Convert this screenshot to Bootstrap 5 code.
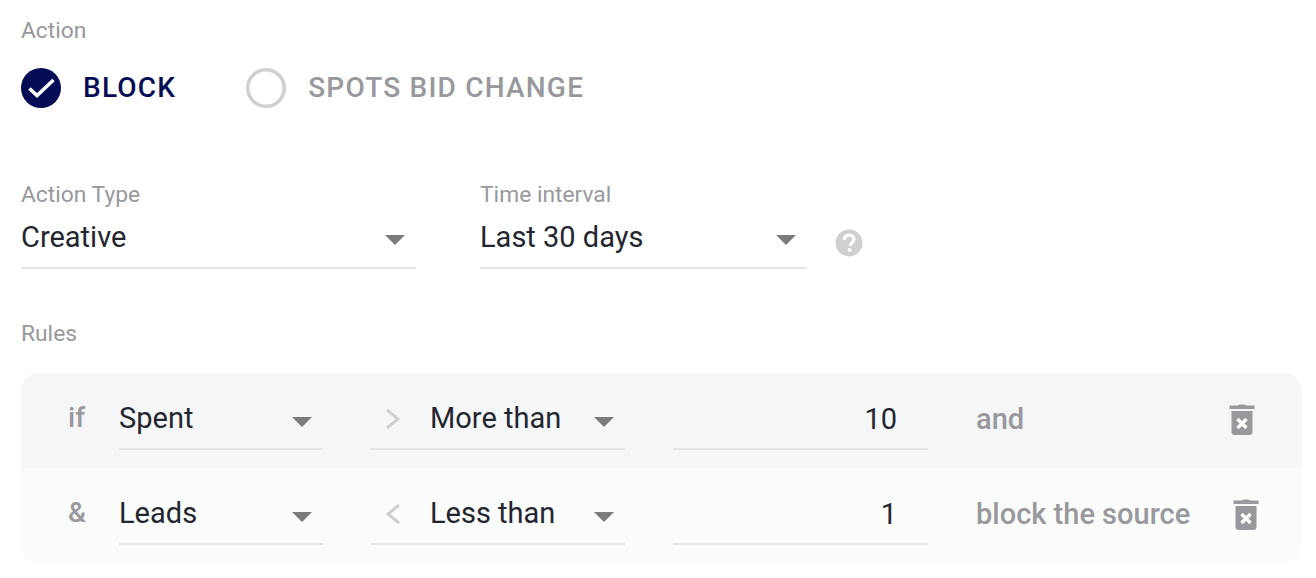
<!DOCTYPE html>
<html lang="en">
<head>
<meta charset="utf-8">
<title>Action</title>
<link href="https://cdn.jsdelivr.net/npm/bootstrap@5.3.0/dist/css/bootstrap.min.css" rel="stylesheet">
<style>
html,body{height:578px;overflow:hidden;background:#fff}
body{font-family:Roboto,"Liberation Sans",sans-serif;color:#24262f}
.pg{padding:17px 14px 0 21px}
.lab{font-size:22.8px;line-height:28px;height:26px;color:#98989d}
.radios{margin-top:25px;height:40px;gap:70px}
.rad{gap:22px;font-size:28px;font-weight:500;letter-spacing:1.2px;line-height:40px;color:#98989d}
.rad.on{color:#040c55}
.rad svg{display:block;flex:none}
.fields{margin-top:73px;align-items:flex-start}
.ttl{margin-bottom:12px}
.fld{border-bottom:2px solid #e4e4e6;font-size:29px;line-height:34px;height:50px;padding-top:1px;flex:none}
.caret{width:0;height:0;border-left:10px solid transparent;border-right:10px solid transparent;border-top:10px solid #7b7b7b;flex:none;margin-top:16px;margin-right:11px}
.f1{width:395px}
.f2{width:327px}
.f1 .caret,.f2 .caret{margin-top:15px}
.col2{margin-left:64px}
.qm{margin:48px 0 0 28px;flex:none}
.rules-t{margin-top:51px}
.box{margin-top:27px;border-radius:18px;overflow:hidden}
.rw{height:95px;padding:27px 0 0 47px}
.r1{background:#f5f6f8}
.r2{background:#fafbfb;height:94px}
.lead-w{width:51px;flex:none;font-size:28px;font-weight:500;color:#98989d;line-height:34px;padding-top:1px}
.fld.a{width:204px}
.fld.b{width:254px;margin-left:48px}
.sign{display:block;flex:none;margin:7px 29px 0 14px}
.fld.c{width:255px;margin-left:48px;padding:2px 31px 0 0;text-align:right}
.tail{width:254px;margin-left:48px;font-size:29px;font-weight:500;color:#98989d;line-height:34px;padding-top:2px;white-space:nowrap;flex:none}
.bin{display:block;flex:none;margin-top:2px}
.r1 .bin{margin-left:-1px}
.r2 .bin{margin-left:3px}
</style>
</head>
<body>
<main class="pg">
  <div class="lab">Action</div>
  <div class="radios d-flex">
    <div class="rad on d-flex align-items-center">
      <svg width="40" height="40" viewBox="0 0 40 40"><circle cx="20" cy="20" r="20" fill="#040c55"/><path d="M8.500 20.500L16 27.500L32.500 12" fill="none" stroke="#fff" stroke-width="3.600"/></svg>
      <span>BLOCK</span>
    </div>
    <div class="rad d-flex align-items-center">
      <svg width="40" height="40" viewBox="0 0 40 40"><circle cx="20" cy="20" r="18.250" fill="#fff" stroke="#d0d0d0" stroke-width="3.500"/></svg>
      <span>SPOTS BID CHANGE</span>
    </div>
  </div>
  <div class="fields d-flex">
    <div>
      <div class="lab ttl">Action Type</div>
      <div class="fld f1 d-flex align-items-start justify-content-between"><span>Creative</span><i class="caret"></i></div>
    </div>
    <div class="col2">
      <div class="lab ttl">Time interval</div>
      <div class="fld f2 d-flex align-items-start justify-content-between"><span>Last 30 days</span><i class="caret"></i></div>
    </div>
    <svg class="qm" width="28" height="28" viewBox="0 0 28 28"><circle cx="14" cy="14" r="13.500" fill="#d0d0d0"/><path d="M9.300 11c0-3 2.100-4.800 4.900-4.800s4.800 1.700 4.800 4.100c0 3.500-3.600 3.200-3.600 6.700" fill="none" stroke="#fff" stroke-width="3.200"/><rect x="12.900" y="19.300" width="3.400" height="3.400" fill="#fff"/></svg>
  </div>
  <div class="lab rules-t">Rules</div>
  <div class="box">
    <div class="rw r1 d-flex align-items-start">
      <div class="lead-w">if</div>
      <div class="fld a d-flex align-items-start justify-content-between"><span>Spent</span><i class="caret"></i></div>
      <div class="fld b d-flex align-items-start">
        <svg class="sign" width="16" height="22" viewBox="0 0 16 22"><path d="M2 2l11 9L2 20" fill="none" stroke="#d0d0d0" stroke-width="3"/></svg>
        <span>More than</span><i class="caret ms-auto"></i>
      </div>
      <div class="fld c">10</div>
      <div class="tail">and</div>
      <svg class="bin" width="26" height="34" viewBox="0 0 26 34"><path d="M0.500 3.500h8c1-1.500 8-1.500 9 0h8V7H0.500z" fill="#98989d"/><path d="M2.500 9h21v21.500a3 3 0 0 1-3 2.500H5.500a3 3 0 0 1-3-2.500z" fill="#98989d"/><path d="M8.500 17l9 9M17.500 17l-9 9" stroke="#fff" stroke-width="3.400"/></svg>
    </div>
    <div class="rw r2 d-flex align-items-start">
      <div class="lead-w">&amp;</div>
      <div class="fld a d-flex align-items-start justify-content-between"><span>Leads</span><i class="caret"></i></div>
      <div class="fld b d-flex align-items-start">
        <svg class="sign" width="16" height="22" viewBox="0 0 16 22"><path d="M14 2L3 11l11 9" fill="none" stroke="#d0d0d0" stroke-width="3"/></svg>
        <span>Less than</span><i class="caret ms-auto"></i>
      </div>
      <div class="fld c">1</div>
      <div class="tail">block the source</div>
      <svg class="bin" width="26" height="34" viewBox="0 0 26 34"><path d="M0.500 3.500h8c1-1.500 8-1.500 9 0h8V7H0.500z" fill="#98989d"/><path d="M2.500 9h21v21.500a3 3 0 0 1-3 2.500H5.500a3 3 0 0 1-3-2.500z" fill="#98989d"/><path d="M8.500 17l9 9M17.500 17l-9 9" stroke="#fff" stroke-width="3.400"/></svg>
    </div>
  </div>
</main>
<script src="https://cdn.jsdelivr.net/npm/bootstrap@5.3.0/dist/js/bootstrap.bundle.min.js"></script>
</body>
</html>
